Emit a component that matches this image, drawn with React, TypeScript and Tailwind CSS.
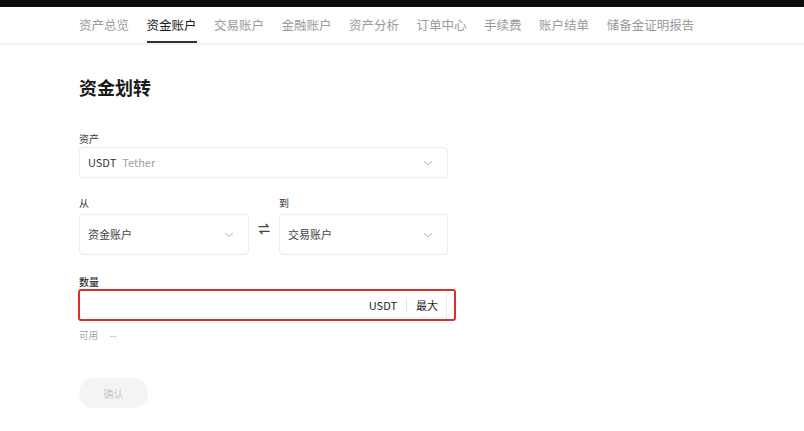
import { ChevronDown } from 'lucide-react'

const tabs = ['资产总览', '资金账户', '交易账户', '金融账户', '资产分析', '订单中心', '手续费', '账户结单', '储备金证明报告']

function Select({ children, className = '' }: { children: React.ReactNode; className?: string }) {
  return (
    <div className={`flex items-center justify-between rounded border border-[#ebebeb] bg-white pl-2 pr-3 ${className}`}>
      <div className="flex items-center gap-1.5 text-[11px]">{children}</div>
      <ChevronDown className="h-3.5 w-3.5 text-[#a0a0a0]" strokeWidth={1.5} />
    </div>
  )
}

export default function App() {
  return (
    <div className="min-h-[431px] w-[804px] bg-white text-[#1a1a1a]" style={{ fontFamily: '"Noto Sans CJK SC", "Noto Sans", sans-serif' }}>
      <div className="h-[7px] bg-[#0d0d0d]" />
      <div className="flex h-[38px] items-end gap-[17.5px] border-b-2 border-[#f4f4f4] pl-[79px]">
        {tabs.map((t, i) => (
          <div key={t} className={`flex h-full flex-col justify-center text-[12.5px] leading-none ${i === 1 ? 'border-b-2 border-[#333] pt-[2px] text-[#1a1a1a]' : 'text-[#9a9a9a]'}`}>
            {t}
          </div>
        ))}
      </div>

      <div className="pl-[79px]">
        <h1 className="mt-[30px] text-[18px] font-bold leading-[24px]">资金划转</h1>

        <div className="mt-[34px] text-[10px] leading-[12px] text-[#333]">资产</div>
        <Select className="mt-[2px] h-[31px] w-[369px]">
          <span className="text-[#333]">USDT</span>
          <span className="text-[#a0a0a0]">Tether</span>
        </Select>

        <div className="mt-[19px] flex w-[369px] items-start">
          <div className="flex flex-col">
            <div className="text-[10px] leading-[12px] text-[#333]">从</div>
            <Select className="mt-[5px] h-[41px] w-[170px]">
              <span className="text-[#444]">资金账户</span>
            </Select>
          </div>
          <div className="flex w-[30px] justify-center pt-[26px] text-[12px] font-bold leading-[12px] text-[#444]">⇌</div>
          <div className="flex flex-col">
            <div className="text-[10px] leading-[12px] text-[#333]">到</div>
            <Select className="mt-[5px] h-[41px] w-[169px]">
              <span className="text-[#444]">交易账户</span>
            </Select>
          </div>
        </div>

        <div className="mt-[21px] text-[10px] font-medium leading-[12px] text-[#333]">数量</div>
        <div className="-ml-px mt-[1px] w-[378px] rounded-[3px] border-2 border-[#d9302a] pr-[7px]">
          <div className="flex h-[28px] items-center justify-end border-r border-[#ebebeb] pr-2 text-[11px] text-[#222]">
            <span>USDT</span>
            <span className="mx-[9px] h-[13px] w-px bg-[#e4e4e4]" />
            <span>最大</span>
          </div>
        </div>

        <div className="mt-[8px] flex text-[9.5px] leading-[12px] text-[#a8a8a8]">
          <span className="w-[31px]">可用</span>
          <span>--</span>
        </div>

        <button className="mt-[37px] flex h-[30px] w-[69px] items-center justify-center rounded-full bg-[#f4f4f4] text-[10px] text-[#c8c8c8]">
          确认
        </button>
      </div>
    </div>
  )
}
